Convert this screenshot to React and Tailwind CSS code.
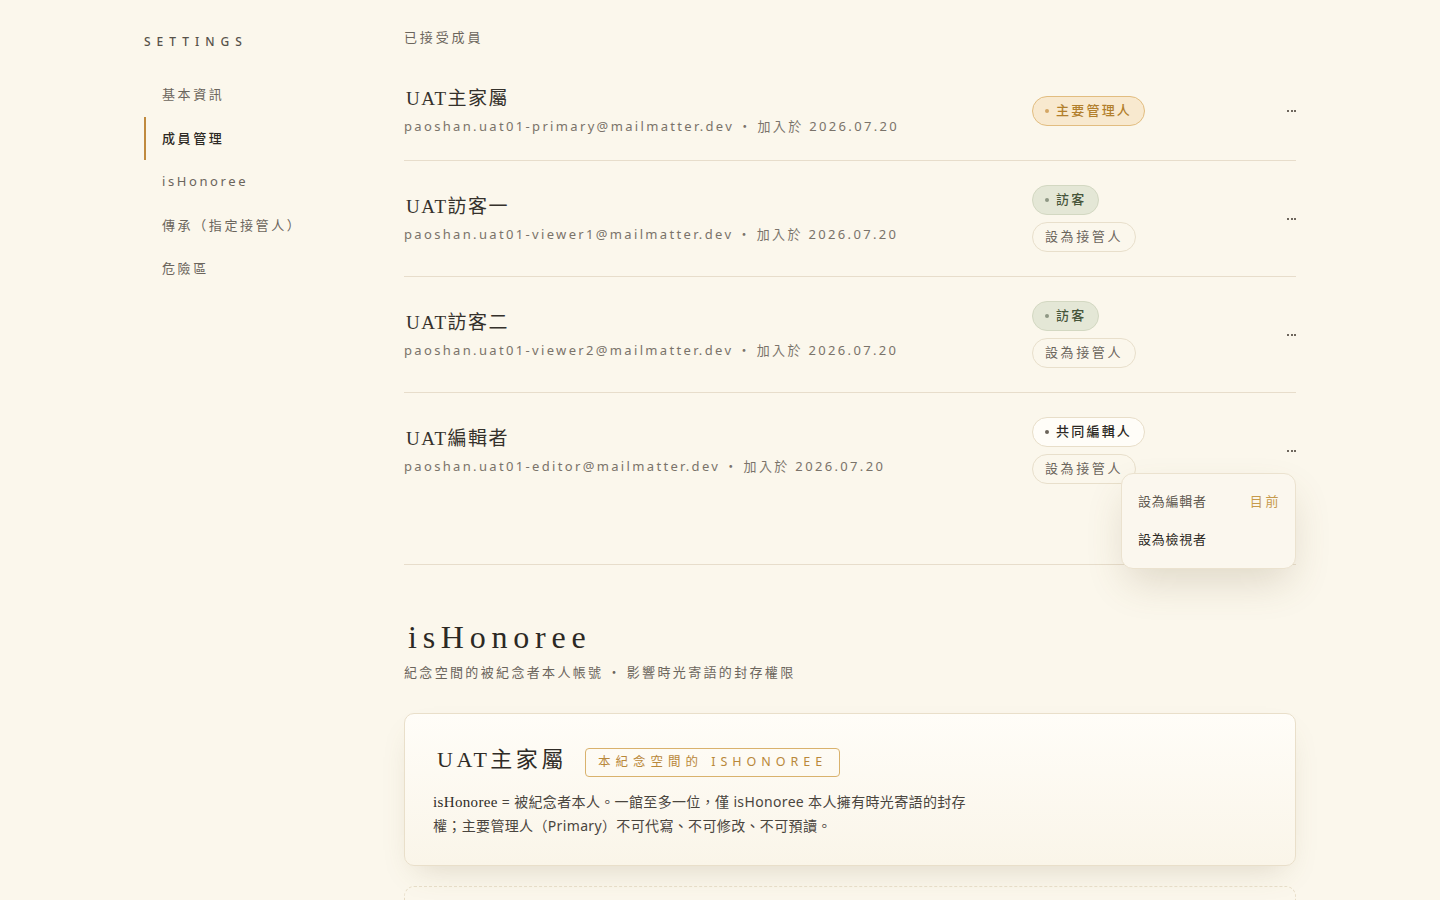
import { useState } from 'react';

const SANS = { fontFamily: '"Noto Sans", "Noto Sans CJK TC", sans-serif' };
const SERIF = { fontFamily: '"Liberation Serif", "Noto Sans CJK TC", serif' };

const NAV = ['基本資訊', '成員管理', 'isHonoree', '傳承（指定接管人）', '危險區'];

const MEMBERS = [
    { name: 'UAT主家屬', email: 'paoshan.uat01-primary@mailmatter.dev', role: 'primary' },
    { name: 'UAT訪客一', email: 'paoshan.uat01-viewer1@mailmatter.dev', role: 'viewer' },
    { name: 'UAT訪客二', email: 'paoshan.uat01-viewer2@mailmatter.dev', role: 'viewer' },
    { name: 'UAT編輯者', email: 'paoshan.uat01-editor@mailmatter.dev', role: 'editor' },
];

function RolePill({ role }) {
    if (role === 'primary') {
        return (
            <span className="inline-flex items-center gap-[7px] h-[30px] px-3 rounded-full border border-[#e2bd80] bg-[#f8e9cf] text-[#b27f2c] text-[13px] tracking-[0.17em] font-medium">
                <span className="w-[4px] h-[4px] rounded-full bg-[#d4a664]" />
                主要管理人
            </span>
        );
    }
    if (role === 'viewer') {
        return (
            <span className="inline-flex items-center gap-[7px] h-[30px] px-3 rounded-full border border-[#d3d8c2] bg-[#e4e7d6] text-[#46553a] text-[13px] tracking-[0.17em] font-medium">
                <span className="w-[4px] h-[4px] rounded-full bg-[#8e9784]" />
                訪客
            </span>
        );
    }
    return (
        <span className="inline-flex items-center gap-[7px] h-[30px] px-3 rounded-full border border-[#e8dec9] bg-[#fffdf8] text-[#2c2924] text-[13px] tracking-[0.17em] font-medium">
            <span className="w-[4px] h-[4px] rounded-full bg-[#6b645a]" />
            共同編輯人
        </span>
    );
}

function MoreButton() {
    return (
        <button className="flex items-center gap-[1.5px] h-4 px-0">
            <span className="w-[2px] h-[2px] bg-[#6e675d]" />
            <span className="w-[2px] h-[2px] bg-[#6e675d]" />
            <span className="w-[2px] h-[2px] bg-[#6e675d]" />
        </button>
    );
}

function RoleMenu() {
    return (
        <div className="absolute right-0 top-[30px] w-[175px] py-[9px] px-4 rounded-xl border border-[#ebe2cf] bg-[#fbf7ee] shadow-[0_18px_40px_-6px_rgba(110,90,50,0.2)] z-10 text-[13px] tracking-[0.06em]">
            <div className="h-[38px] flex items-center justify-between">
                <span className="text-[#5e584f]">設為編輯者</span>
                <span className="text-[#c69a4c] tracking-[0.2em] -mr-[2px]">目前</span>
            </div>
            <div className="h-[38px] flex items-center text-[#2c2924]">設為檢視者</div>
        </div>
    );
}

function MemberRow({ member, last, menuOpen }) {
    return (
        <div className={`flex items-center py-6 ${last ? '' : 'border-b border-[#e7ddcb]'}`}>
            <div className="flex-1">
                <div className="text-[19px] leading-7 text-[#35312b] tracking-[0.08em] pl-[2px] mb-[3px]" style={SERIF}>
                    {member.name}
                </div>
                <div className="text-[13px] leading-5 text-[#7a736a] tracking-[0.18em]">
                    {member.email}
                    <span className="mx-[4px]">・</span>
                    加入於 2026.07.20
                </div>
            </div>
            <div className="w-[264px] flex items-center justify-between">
                <div className="flex flex-col items-start gap-[7px]">
                    <RolePill role={member.role} />
                    {member.role !== 'primary' && (
                        <button className="h-[30px] px-3 rounded-full border border-[#e8dfcb] text-[#6b655c] text-[13px] tracking-[0.2em]">
                            設為接管人
                        </button>
                    )}
                </div>
                <div className="relative">
                    <MoreButton />
                    {menuOpen && <RoleMenu />}
                </div>
            </div>
        </div>
    );
}

export default function App() {
    const [active] = useState(1);

    return (
        <div className="min-h-screen bg-[#fbf7ec] text-[#2c2924]" style={SANS}>
            <div className="flex pl-[144px]">
                {/* Sidebar */}
                <aside className="w-[260px] shrink-0 pt-[34px]">
                    <div className="text-[12px] leading-4 tracking-[0.5em] text-[#57524a] font-medium">SETTINGS</div>
                    <nav className="mt-[23px] w-[200px]">
                        {NAV.map((item, i) => (
                            <div
                                key={item}
                                className={`h-[43.5px] flex items-center pl-4 text-[13px] tracking-[0.2em] border-l-2 ${
                                    i === active
                                        ? 'border-[#c08a3e] text-[#2c2924] font-medium'
                                        : 'border-transparent text-[#6b655c]'
                                }`}
                            >
                                {item}
                            </div>
                        ))}
                    </nav>
                </aside>

                {/* Main */}
                <main className="w-[892px] shrink-0 pt-[27px]">
                    <div className="text-[13px] leading-5 tracking-[0.22em] text-[#6b655c] mb-[14px]">已接受成員</div>

                    <section className="pb-14 border-b border-[#e7ddcb]">
                        {MEMBERS.map((m, i) => (
                            <MemberRow key={m.email} member={m} last={i === MEMBERS.length - 1} menuOpen={i === MEMBERS.length - 1} />
                        ))}
                    </section>

                    <section className="mt-[52px]">
                        <h2 className="text-[32px] leading-10 tracking-[0.18em] text-[#2c2924] pl-[4px]" style={SERIF}>
                            isHonoree
                        </h2>
                        <p className="mt-[5px] text-[13px] leading-5 tracking-[0.18em] text-[#6b655c]">
                            紀念空間的被紀念者本人帳號<span className="mx-[4px]">・</span>影響時光寄語的封存權限
                        </p>

                        <div className="mt-[31px] rounded-[10px] border border-[#e9dfca] bg-gradient-to-b from-[#fffdf8] to-[#faf5e9] pt-7 pb-[27px] px-7 shadow-[0_14px_30px_-12px_rgba(120,100,60,0.22)]">
                            <div className="flex items-center gap-[18px]">
                                <span className="text-[22px] leading-8 tracking-[0.16em] text-[#2f2b26] pl-[4px]" style={SERIF}>
                                    UAT主家屬
                                </span>
                                <span className="h-[29px] inline-flex items-center px-3 rounded-[4px] border border-[#d9b26d] text-[12.5px] tracking-[0.4em] text-[#b9883a] mt-[6px]">
                                    本紀念空間的 ISHONOREE
                                </span>
                            </div>
                            <p className="mt-[13px] text-[14px] leading-6 tracking-[0.025em] text-[#4a453e]">
                                <span className="text-[15px] text-[#2f2b26]" style={SERIF}>isHonoree</span> = 被紀念者本人。一館至多一位，僅 isHonoree 本人擁有時光寄語的封存
                                <br />
                                權；主要管理人（Primary）不可代寫、不可修改、不可預讀。
                            </p>
                        </div>

                        <div className="mt-5 h-[120px] rounded-[10px] border border-dashed border-[#e6dcc6]" />
                    </section>
                </main>
            </div>
        </div>
    );
}
